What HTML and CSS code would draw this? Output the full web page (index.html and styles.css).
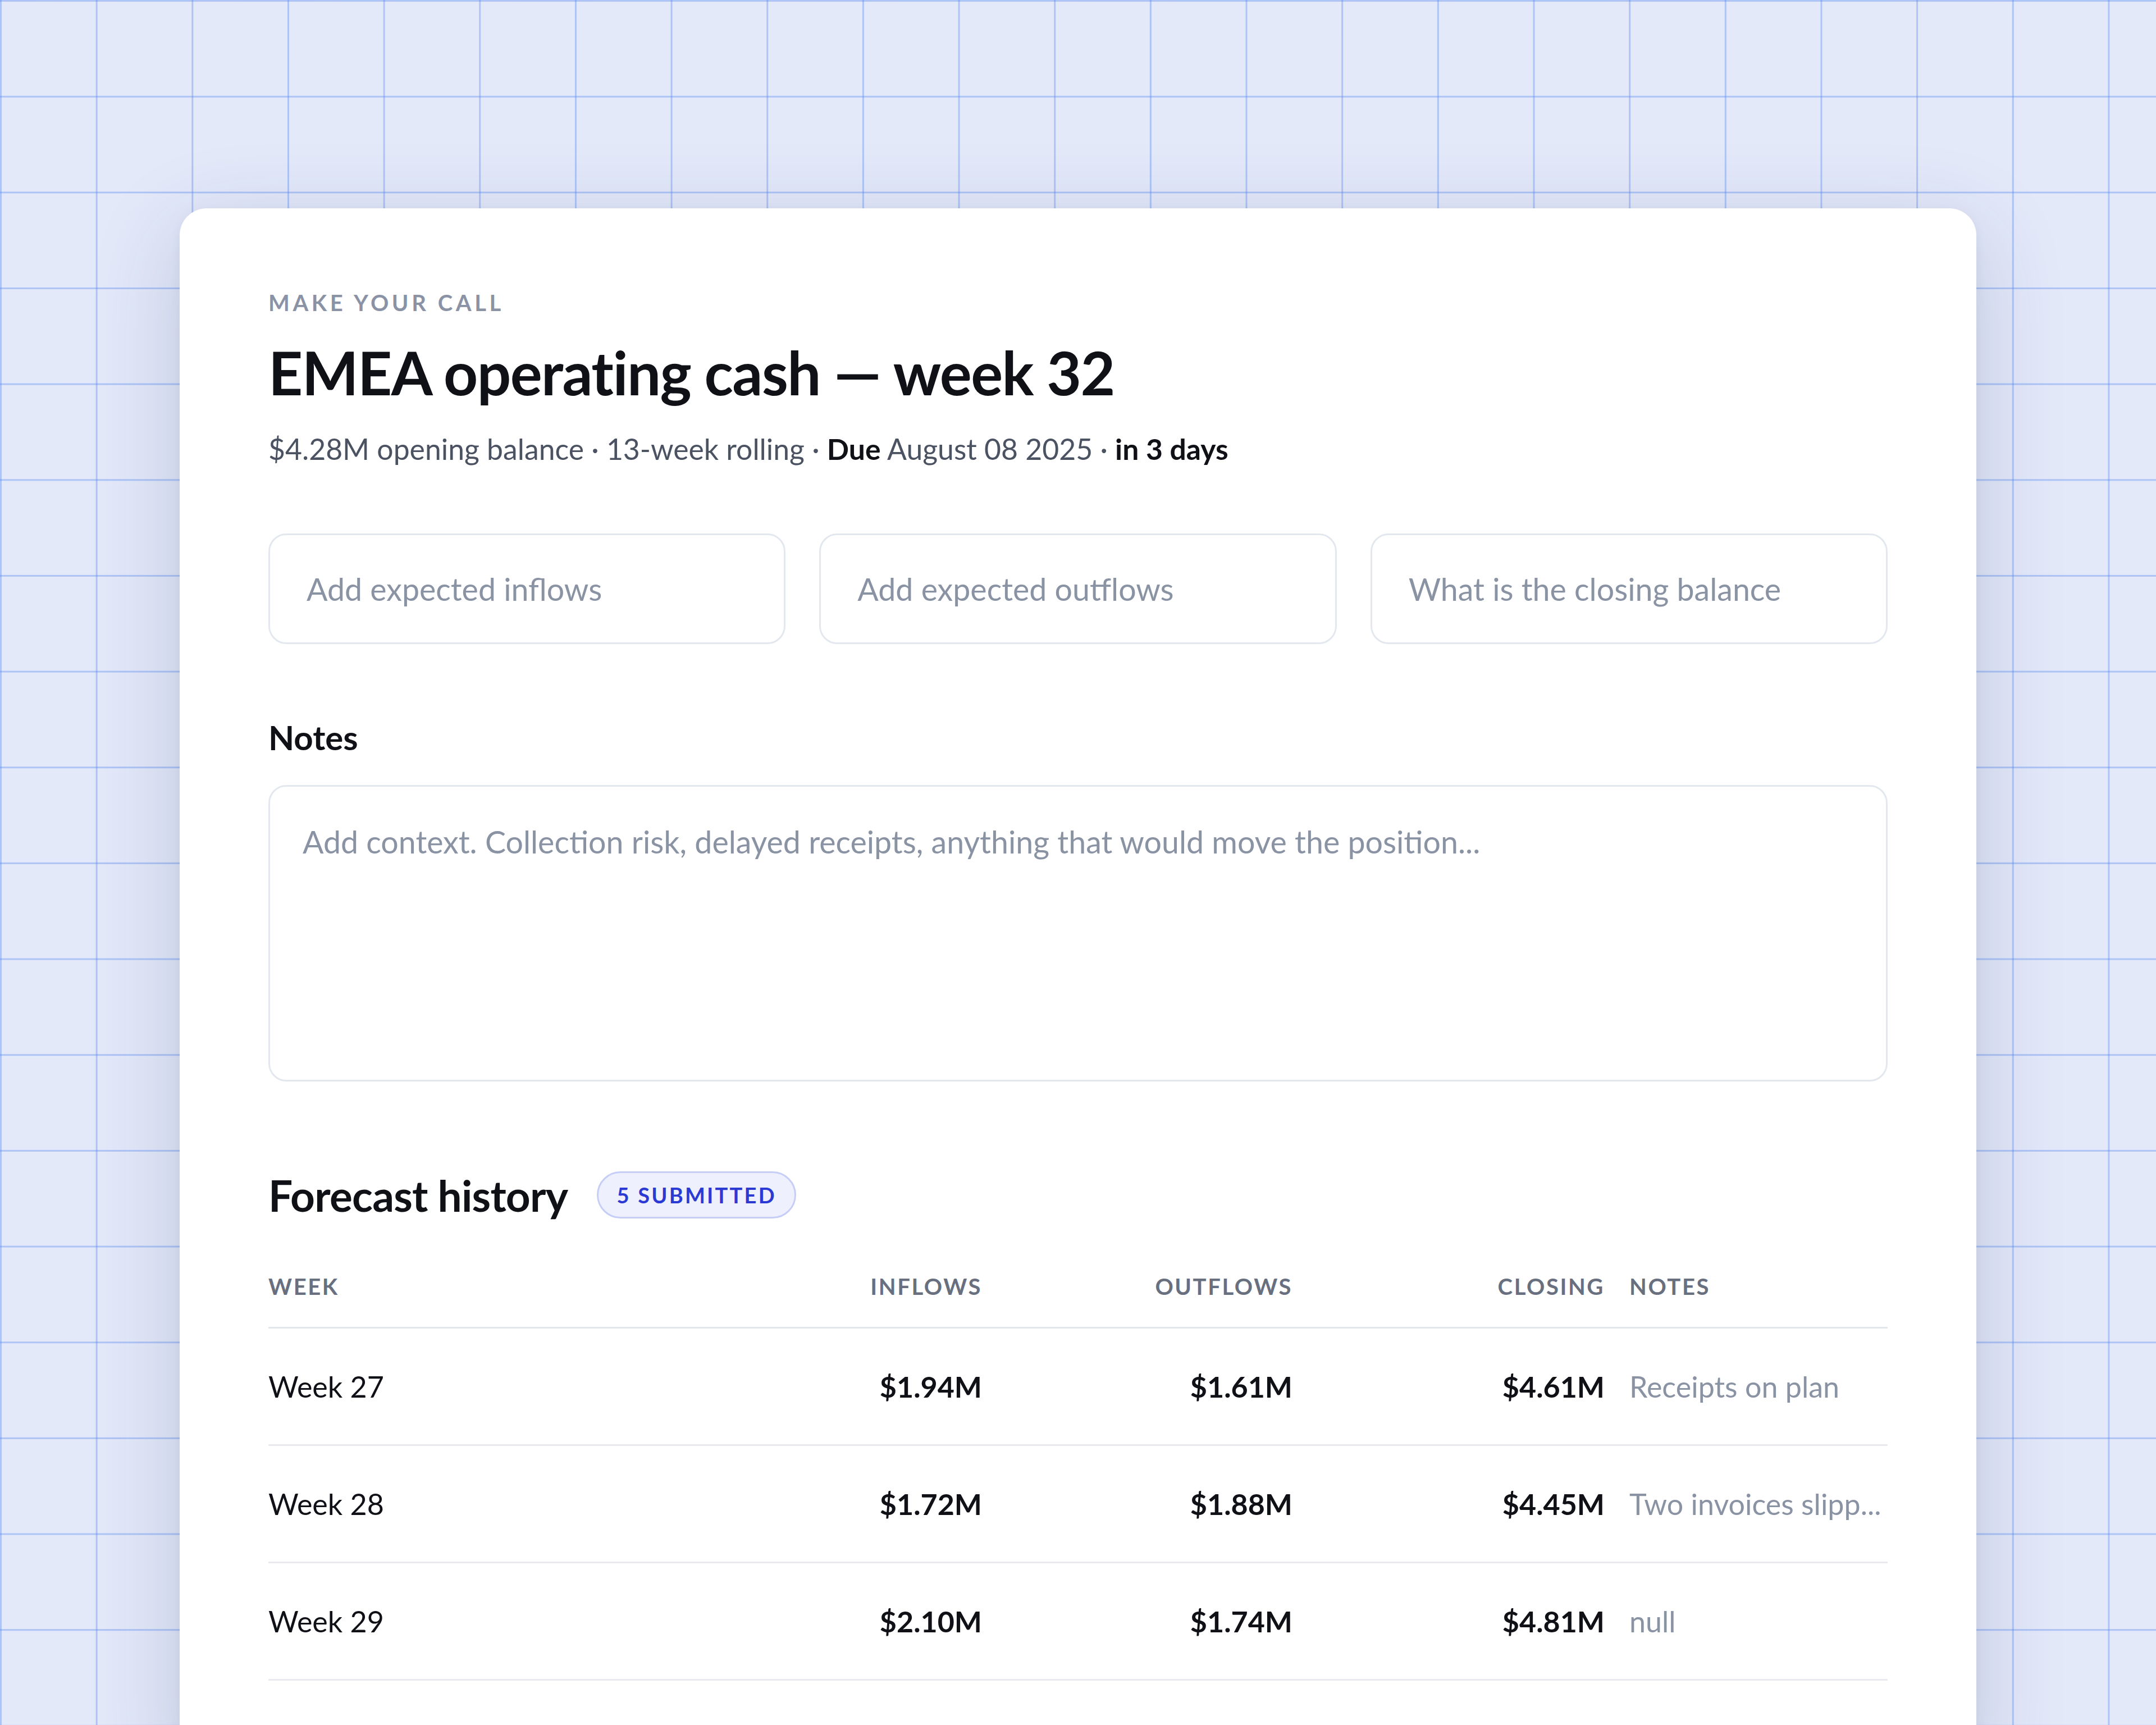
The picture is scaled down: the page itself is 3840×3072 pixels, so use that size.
FILE: index.html
```html
<!DOCTYPE html>
<html>
<head>
	<title>Make your call</title>
	<meta charset="UTF-8">
	<meta name="viewport" content="width=device-width, initial-scale=1.0">
	<link rel="stylesheet" href="styles.css">
</head>
<body>
	<div class="card">
		<p class="eyebrow">Make your call</p>
		<h1>EMEA operating cash — week 32</h1>
		<p class="meta">$4.28M opening balance · 13-week rolling · <b>Due</b> August 08 2025 · <b>in 3 days</b></p>

		<!-- the three numbers we ask for -->
		<div class="fields">
			<input type="text" placeholder="Add expected inflows">
			<input type="text" placeholder="Add expected outflows">
			<input type="text" placeholder="What is the closing balance">
		</div>

		<label class="notes-label" for="notes">Notes</label>
		<textarea id="notes" placeholder="Add context. Collection risk, delayed receipts, anything that would move the position..."></textarea>

		<div class="history-head">
			<h2>Forecast history</h2>
			<span class="badge">5 submitted</span>
		</div>

		<table class="history">
			<colgroup>
				<col class="col-week">
				<col class="col-num">
				<col class="col-num">
				<col class="col-closing">
				<col class="col-notes">
			</colgroup>
			<thead>
				<tr>
					<th>Week</th>
					<th class="num">Inflows</th>
					<th class="num">Outflows</th>
					<th class="num">Closing</th>
					<th>Notes</th>
				</tr>
			</thead>
			<tbody>
				<tr>
					<td>Week 27</td>
					<td class="num">$1.94M</td>
					<td class="num">$1.61M</td>
					<td class="num">$4.61M</td>
					<td class="note">Receipts on plan</td>
				</tr>
				<tr>
					<td>Week 28</td>
					<td class="num">$1.72M</td>
					<td class="num">$1.88M</td>
					<td class="num">$4.45M</td>
					<td class="note">Two invoices slipp...</td>
				</tr>
				<tr>
					<td>Week 29</td>
					<td class="num">$2.10M</td>
					<td class="num">$1.74M</td>
					<td class="num">$4.81M</td>
					<td class="note">null</td>
				</tr>
			</tbody>
		</table>
	</div>
</body>
</html>
```

FILE: styles.css
```css
	body {
		margin: 0;
		min-height: 3072px;
		font-family: Lato, "Noto Sans", sans-serif;
		color: #0f1117;
		background-color: #e3e9f9;
		background-image:
			linear-gradient(to right, rgba(86, 136, 240, 0.38) 3px, transparent 3px),
			linear-gradient(to bottom, rgba(86, 136, 240, 0.38) 3px, transparent 3px);
		background-size: 170.67px 170.67px;
		overflow: hidden;
	}

	.card {
		width: 3200px;
		box-sizing: border-box;
		margin: 371px auto 0;
		padding: 144px 158px 160px;
		background: #ffffff;
		border-radius: 48px;
		box-shadow: 0 40px 160px rgba(35, 50, 100, 0.19), 0 6px 20px rgba(35, 50, 100, 0.06);
	}

	.eyebrow {
		margin: 0;
		font-size: 40px;
		line-height: 48px;
		font-weight: 700;
		letter-spacing: 0.14em;
		text-transform: uppercase;
		color: #8a93a5;
	}

	h1 {
		margin: 39px 0 0;
		font-size: 106.7px;
		line-height: 122.7px;
		font-weight: 700;
		letter-spacing: -0.015em;
		color: #0f1117;
	}

	.meta {
		margin: 37px 0 0;
		font-size: 51.7px;
		line-height: 74.7px;
		color: #4b5261;
	}

	.meta b {
		color: #0f1117;
	}

	/* inputs */
	.fields {
		display: flex;
		gap: 60px;
		margin-top: 114px;
	}

	.fields input,
	textarea {
		box-sizing: border-box;
		border: 3px solid #e3e7ee;
		border-radius: 32px;
		background: #ffffff;
		font-family: Lato, "Noto Sans", sans-serif;
		font-size: 55.5px;
		color: #0f1117;
		outline: none;
	}

	.fields input {
		flex: 1;
		min-width: 0;
		height: 197px;
		padding: 0 65px;
	}

	::placeholder {
		color: #8a93a3;
		opacity: 1;
	}

	.notes-label {
		display: block;
		margin-top: 130px;
		font-size: 60px;
		line-height: 73px;
		font-weight: 700;
	}

	textarea {
		display: block;
		width: 100%;
		height: 528px;
		margin-top: 48px;
		padding: 56px 58px;
		line-height: 84px;
		resize: none;
	}

	/* history */
	.history-head {
		display: flex;
		align-items: center;
		gap: 52px;
		margin-top: 157px;
	}

	h2 {
		margin: 0;
		font-size: 76.5px;
		line-height: 90px;
		font-weight: 700;
		letter-spacing: -0.01em;
	}

	.badge {
		box-sizing: border-box;
		height: 84px;
		display: flex;
		align-items: center;
		padding: 0 32px;
		border: 3px solid #c6cef7;
		border-radius: 42px;
		background: #eef0fe;
		color: #2a3ad3;
		font-size: 38px;
		font-weight: 700;
		letter-spacing: 0.085em;
		text-transform: uppercase;
	}

	.history {
		width: 100%;
		margin-top: 94px;
		border-collapse: collapse;
		table-layout: fixed;
	}

	.col-num {
		width: 553px;
	}

	.col-closing {
		width: 556px;
	}

	.col-notes {
		width: 482px;
	}

	.history th,
	.history td {
		padding: 0 22px;
		text-align: left;
		white-space: nowrap;
		overflow: hidden;
		text-overflow: ellipsis;
	}

	.history th:first-child,
	.history td:first-child {
		padding-left: 0;
	}

	.history th:last-child,
	.history td:last-child {
		padding-right: 0;
	}

	.history th {
		padding-bottom: 48px;
		font-size: 40px;
		line-height: 48px;
		font-weight: 700;
		letter-spacing: 0.065em;
		text-transform: uppercase;
		color: #687080;
		border-bottom: 3px solid #e3e6ec;
	}

	.history td {
		padding-top: 77px;
		padding-bottom: 77px;
		font-size: 52px;
		line-height: 52px;
		color: #0f1117;
		border-bottom: 3px solid #e8eaef;
	}

	.history .num {
		text-align: right;
	}

	.history td.num {
		font-weight: 700;
	}

	.history td.note {
		color: #8a93a3;
	}
```
